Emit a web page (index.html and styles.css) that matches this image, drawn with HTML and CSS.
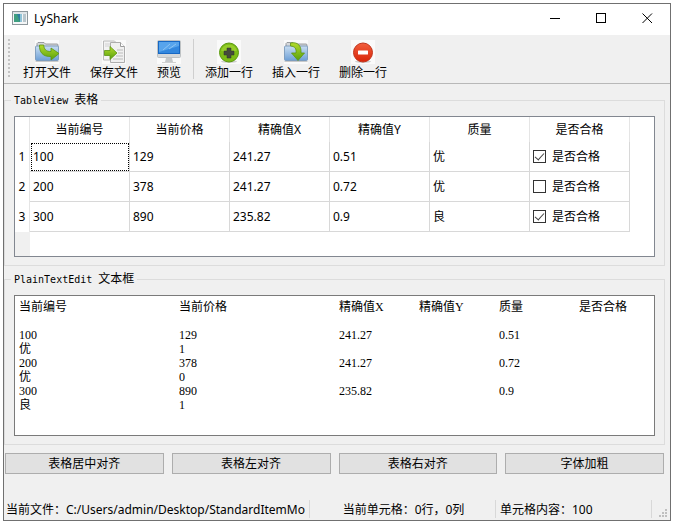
FILE: index.html
```html
<!DOCTYPE html>
<html lang="zh-CN">

<head>
    <meta charset="UTF-8">
    <meta name="viewport" content="width=device-width, initial-scale=1.0">
    <title>LyShark</title>
    <link rel="stylesheet" href="styles.css">
</head>

<body>
    <div class="window">
        <header class="titlebar">
            <svg class="app-icon" width="16" height="14" viewBox="0 0 16 14">
                <rect x="0.5" y="0.5" width="15" height="13" fill="#f4f6f7" stroke="#8d979c" />
                <rect x="1" y="1" width="14" height="2" fill="#dfe5e8" />
                <rect x="2" y="3" width="6" height="8" fill="#2f7fa0" />
                <path d="M2 3h3l3 8H2z" fill="#3f9f80" />
                <rect x="8" y="3" width="2" height="8" fill="#8fc3d8" />
                <rect x="11" y="3" width="3" height="8" fill="#b9c6cc" />
            </svg>
            <span class="title">LyShark</span>
            <button class="win-btn" aria-label="最小化">
                <svg width="11" height="11" viewBox="0 0 11 11"><path d="M0 5.5h10" stroke="#000" /></svg>
            </button>
            <button class="win-btn" aria-label="最大化">
                <svg width="11" height="11" viewBox="0 0 11 11"><rect x="0.5" y="0.5" width="9" height="9" fill="none" stroke="#000" /></svg>
            </button>
            <button class="win-btn" aria-label="关闭">
                <svg width="11" height="11" viewBox="0 0 11 11"><path d="M0.5 0.5l9.5 9.5M10 0.5L0.5 10" stroke="#000" /></svg>
            </button>
        </header>

        <nav class="toolbar">
            <span class="handle"></span>
            <button class="tool">
                <svg width="24" height="24" viewBox="0 0 24 24">
                    <defs>
                        <linearGradient id="blue" x1="0" y1="0" x2="0" y2="1">
                            <stop offset="0" stop-color="#c9def2" />
                            <stop offset="1" stop-color="#6d9fd6" />
                        </linearGradient>
                        <linearGradient id="green" x1="0" y1="0" x2="0" y2="1">
                            <stop offset="0" stop-color="#b5dc2c" />
                            <stop offset="1" stop-color="#57a00d" />
                        </linearGradient>
                    </defs>
                    <rect width="24" height="24" fill="#fafafa" />
                    <path d="M2 5V3.5l1-1h6l1.5 1.5H22q1 0 1 1v2H2z" fill="#d5d8db" stroke="#85898d" stroke-width="0.8" />
                    <rect x="0.5" y="6" width="23" height="14.5" rx="1" fill="url(#blue)" stroke="#6f91b4" stroke-width="0.8" />
                    <path d="M0.5 21.5h23" stroke="#c9c9c9" />
                    <path d="M4.5 5C4 12 8 17 16 16.5V20L24 13.5 16 8v3.5C11 11.8 9 9 8.700 5z" fill="url(#green)" stroke="#5c9612" stroke-width="0.8" />
                </svg>
                <span>打开文件</span>
            </button>
            <button class="tool">
                <svg width="24" height="24" viewBox="0 0 24 24">
                    <rect width="24" height="24" fill="#fafafa" />
                    <path d="M1.5 1h11l3 3v16h-14z" fill="#f3f3f3" stroke="#bcbcbc" />
                    <path d="M3 4h8M3 6h9" stroke="#d2d2d2" />
                    <path d="M8.5 2.5h10l4 4v16h-14z" fill="#f0f0f0" stroke="#adadad" />
                    <path d="M18.5 2.5v4h4" fill="#fff" stroke="#9c9c9c" />
                    <path d="M15 10h6M16 13h5M14 16h7M11 19h10" stroke="#bcbcbc" />
                    <path d="M2.5 10.5H8V6.5L15 13 8 19.5v-4H2.5z" fill="url(#green)" stroke="#5c9612" stroke-width="0.8" />
                </svg>
                <span>保存文件</span>
            </button>
            <button class="tool">
                <svg width="24" height="24" viewBox="0 0 24 24">
                    <rect width="24" height="24" fill="#fafafa" />
                    <rect x="0.5" y="0.5" width="23" height="17" rx="1" fill="#d5d8da" stroke="#b3b7ba" stroke-width="0.8" />
                    <rect x="1" y="1" width="22" height="13" fill="#1768c4" />
                    <rect x="2" y="2" width="20" height="11" fill="#3287de" />
                    <path d="M2 2h20v4L2 12z" fill="#57a4ec" />
                    <path d="M6 10l7-6M12 9l7-5" stroke="#8bc4f4" />
                    <path d="M9 18h6l1 4H8z" fill="#c5c8ca" />
                    <path d="M5 22.5h14" stroke="#d0d0d0" />
                </svg>
                <span>预览</span>
            </button>
            <span class="separator"></span>
            <button class="tool">
                <svg width="24" height="24" viewBox="0 0 24 24">
                    <rect width="24" height="24" fill="#fafafa" />
                    <ellipse cx="12" cy="21.5" rx="8" ry="1.5" fill="#d0d0d0" />
                    <circle cx="12" cy="12.5" r="9.5" fill="#7cbc16" stroke="#5b9a10" />
                    <path d="M4 10.5a8.5 8.5 0 0 1 16 0q-8 4-16 0z" fill="#a9d83a" opacity="0.6" />
                    <path d="M10 8h4v3h3v4h-3v3h-4v-3H7v-4h3z" fill="#454b3c" stroke="#2f3528" stroke-width="0.5" />
                </svg>
                <span>添加一行</span>
            </button>
            <button class="tool">
                <svg width="24" height="24" viewBox="0 0 24 24">
                    <rect width="24" height="24" fill="#fafafa" />
                    <path d="M2 5V3.5l1-1h6l1.5 1.5H22q1 0 1 1v2H2z" fill="#d5d8db" stroke="#85898d" stroke-width="0.8" />
                    <rect x="0.5" y="6" width="23" height="14.5" rx="1" fill="url(#blue)" stroke="#6f91b4" stroke-width="0.8" />
                    <path d="M0.5 21.5h23" stroke="#c9c9c9" />
                    <path d="M6.5 3C14 1.5 17.5 6 17 13h3.5L14 20.5 7.5 13H12C12.5 8.5 11 6.5 6.5 6z" fill="url(#green)" stroke="#5c9612" stroke-width="0.8" />
                </svg>
                <span>插入一行</span>
            </button>
            <button class="tool">
                <svg width="24" height="24" viewBox="0 0 24 24">
                    <defs>
                        <linearGradient id="red" x1="0" y1="0" x2="0" y2="1">
                            <stop offset="0" stop-color="#f2603f" />
                            <stop offset="1" stop-color="#d92407" />
                        </linearGradient>
                    </defs>
                    <rect width="24" height="24" fill="#fafafa" />
                    <ellipse cx="12" cy="21.5" rx="8" ry="1.5" fill="#d0d0d0" />
                    <circle cx="12" cy="12.5" r="9.5" fill="url(#red)" stroke="#c1361e" />
                    <rect x="7" y="10.5" width="10" height="4" rx="0.5" fill="#fff" />
                </svg>
                <span>删除一行</span>
            </button>
        </nav>

        <main class="content">
            <fieldset class="group">
                <legend><span class="latin">TableView </span>表格</legend>
                <div class="table-view">
                    <table>
                        <thead>
                            <tr>
                                <th class="row-head"></th>
                                <th>当前编号</th>
                                <th>当前价格</th>
                                <th>精确值X</th>
                                <th>精确值Y</th>
                                <th>质量</th>
                                <th>是否合格</th>
                            </tr>
                        </thead>
                        <tbody>
                            <tr>
                                <th class="row-head">1</th>
                                <td class="current">100</td>
                                <td>129</td>
                                <td>241.27</td>
                                <td>0.51</td>
                                <td>优</td>
                                <td><label><input type="checkbox" checked>是否合格</label></td>
                            </tr>
                            <tr>
                                <th class="row-head">2</th>
                                <td>200</td>
                                <td>378</td>
                                <td>241.27</td>
                                <td>0.72</td>
                                <td>优</td>
                                <td><label><input type="checkbox">是否合格</label></td>
                            </tr>
                            <tr>
                                <th class="row-head">3</th>
                                <td>300</td>
                                <td>890</td>
                                <td>235.82</td>
                                <td>0.9</td>
                                <td>良</td>
                                <td><label><input type="checkbox" checked>是否合格</label></td>
                            </tr>
                        </tbody>
                    </table>
                </div>
            </fieldset>

            <fieldset class="group">
                <legend><label for="plain-text"><span class="latin">PlainTextEdit </span>文本框</label></legend>
                <textarea id="plain-text" class="text-edit" spellcheck="false">当前编号&#9;&#9;当前价格&#9;&#9;精确值X&#9;精确值Y&#9;质量&#9;是否合格

100&#9;&#9;129&#9;&#9;241.27&#9;&#9;0.51
优&#9;&#9;1
200&#9;&#9;378&#9;&#9;241.27&#9;&#9;0.72
优&#9;&#9;0
300&#9;&#9;890&#9;&#9;235.82&#9;&#9;0.9
良&#9;&#9;1</textarea>
            </fieldset>

            <div class="actions">
                <button>表格居中对齐</button>
                <button>表格左对齐</button>
                <button>表格右对齐</button>
                <button>字体加粗</button>
            </div>
        </main>

        <footer class="statusbar">
            <span>当前文件：C:/Users/admin/Desktop/StandardItemMo</span>
            <span class="center">当前单元格：0行，0列</span>
            <span class="cell-text">单元格内容：100</span>
            <svg class="grip" width="9" height="9" viewBox="0 0 9 9">
                <path d="M6 0h2v2H6zM3 3h2v2H3zM6 3h2v2H6zM0 6h2v2H0zM3 6h2v2H3zM6 6h2v2H6z" fill="#bfbfbf" />
            </svg>
        </footer>
    </div>
</body>

</html>
```

FILE: styles.css
```css
* {
    box-sizing: border-box;
}

body {
    margin: 0;
    padding: 3px 4px 3px 3px;
    min-height: 100vh;
    display: flex;
    background-color: #fff;
    color: #000;
    font-family: "Noto Sans", "Noto Sans CJK SC", sans-serif;
    font-size: 12px;
    line-height: 16px;
}

button,
input,
textarea {
    font: inherit;
    color: inherit;
}

.window {
    flex: 1;
    min-width: 0;
    display: flex;
    flex-direction: column;
    border: 1px solid #707070;
    background-color: #f0f0f0;
}

.titlebar {
    display: flex;
    align-items: center;
    height: 31px;
    padding-left: 8px;
    background-color: #fff;
}

.app-icon {
    margin-bottom: 3px;
}

.title {
    flex: 1;
    padding: 0 6px 2px;
}

.win-btn {
    display: flex;
    align-items: center;
    justify-content: center;
    width: 46px;
    height: 31px;
    padding: 0 0 2px;
    border: 0;
    background: none;
}

/* barra de ferramentas */
.toolbar {
    display: flex;
    gap: 1px;
    height: 49px;
    padding: 4px 3px;
    border-bottom: 1px solid #b8b8b8;
}

.handle {
    width: 2px;
    margin: 0 3px 0 1px;
    background: repeating-linear-gradient(#c3c3c3 0 2px, transparent 2px 4px);
}

.tool {
    display: flex;
    flex-direction: column;
    align-items: center;
    gap: 1px;
    padding: 1px 9px 0;
    border: 0;
    background: none;
}

.tool svg {
    flex: none;
}

.separator {
    width: 1px;
    margin: 0 1px 0 2px;
    background-color: #cfcfcf;
}

.content {
    padding: 9px 5px 0 0;
}

.group {
    min-width: 0;
    margin: 0 0 6px;
    padding: 8px 9px;
    border: 1px solid #dcdcdc;
}

.group legend {
    margin-left: -3px;
    padding: 0 3px;
    line-height: 14px;
}

.latin {
    font-family: "DejaVu Sans Mono", monospace;
    font-size: 10px;
}

/* a faixa cinza da esquerda continua abaixo da última linha */
.table-view {
    height: 141px;
    overflow: hidden;
    border: 1px solid #828790;
    background: linear-gradient(to right, #f0f0f0 15px, #fff 15px);
}

table {
    width: calc(100% - 24px);
    table-layout: fixed;
    border-collapse: separate;
    border-spacing: 0;
}

th,
td {
    padding: 0;
    font-weight: normal;
    background-color: #fff;
}

th {
    height: 25px;
    border-right: 1px solid #e5e5e5;
}

th.row-head {
    width: 15px;
}

td {
    height: 30px;
    padding: 0 3px;
    border-right: 1px solid #d8d8d8;
    border-bottom: 1px solid #d8d8d8;
}

td.current {
    outline: 1px dotted #000;
    outline-offset: -2px;
}

td label {
    display: flex;
    align-items: center;
    gap: 6px;
}

input[type="checkbox"] {
    appearance: none;
    display: flex;
    justify-content: center;
    width: 13px;
    height: 13px;
    margin: 0;
    border: 1px solid #333;
    background-color: #fff;
}

input[type="checkbox"]:checked::after {
    content: "";
    width: 4px;
    height: 8px;
    border: solid #444;
    border-width: 0 1px 1px 0;
    transform: rotate(42deg);
}

.text-edit {
    display: block;
    width: 100%;
    height: 141px;
    padding: 4px;
    border: 1px solid #7a7a7a;
    border-radius: 0;
    outline: none;
    resize: none;
    overflow: hidden;
    background-color: #fff;
    font-family: "Liberation Serif", "Noto Sans CJK SC", serif;
    line-height: 14px;
    white-space: pre;
    tab-size: 80px;
}

.actions {
    display: grid;
    grid-template-columns: repeat(4, 1fr);
    gap: 8px;
    margin: 8px 1px 0;
}

.actions button {
    height: 21px;
    padding: 0;
    border: 1px solid #adadad;
    background-color: #e1e1e1;
}

.statusbar {
    display: grid;
    grid-template-columns: 51fr 31fr 26fr 18px;
    height: 20px;
    margin-top: auto;
    padding-bottom: 2px;
}

.statusbar span {
    min-width: 0;
    padding-left: 2px;
    border-right: 1px solid #d8d8d8;
    overflow: hidden;
    white-space: nowrap;
    line-height: 20px;
}

.statusbar .center {
    text-align: center;
}

.statusbar .cell-text {
    padding-left: 4px;
}

.grip {
    align-self: end;
    justify-self: end;
    margin-right: 2px;
}
```
